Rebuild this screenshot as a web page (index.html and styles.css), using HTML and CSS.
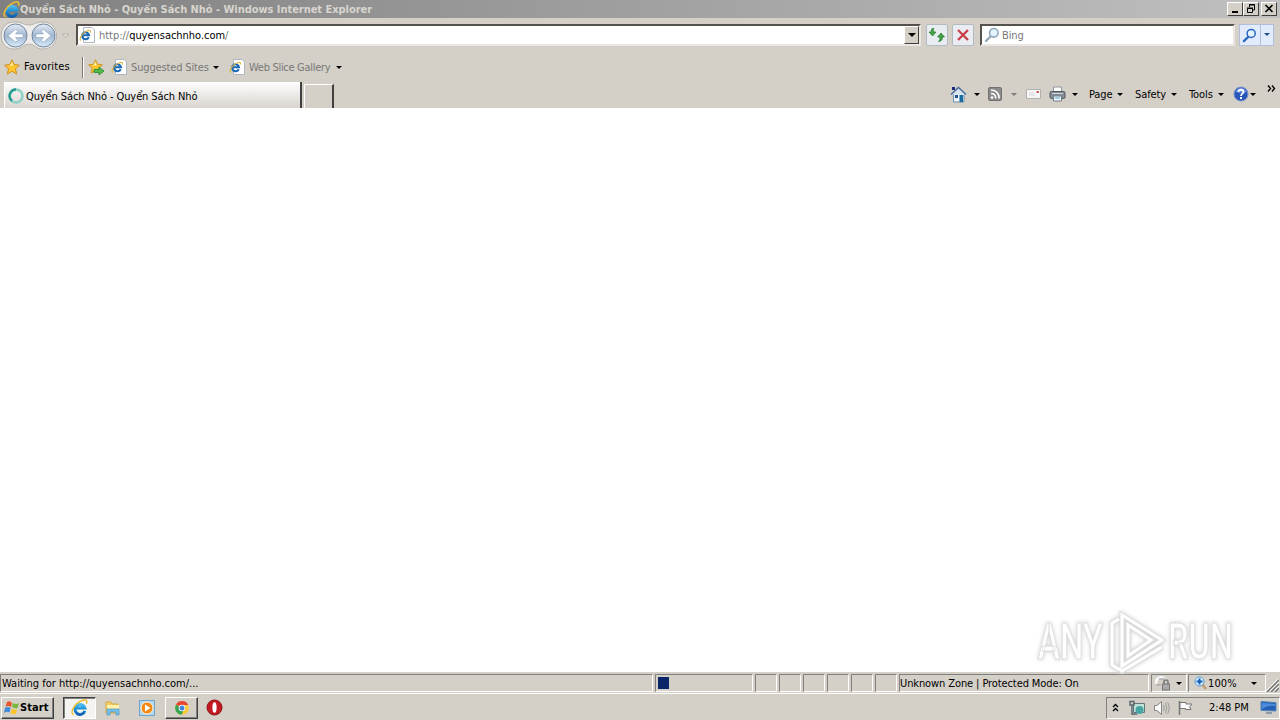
FILE: index.html
```html
<!DOCTYPE html>
<html lang="vi">
    <head>
        <meta charset="utf-8">
        <title>Quyển Sách Nhỏ - Windows Internet Explorer</title>
        <link rel="stylesheet" href="styles.css">
    </head>
    <body>
        <!-- shared icons -->
        <svg class="defs" width="0" height="0">
            <defs>
                <linearGradient id="ieBlue" gradientUnits="userSpaceOnUse" x1="0" y1="2" x2="0" y2="15">
                    <stop offset="0" stop-color="#72d5f7"/>
                    <stop offset=".5" stop-color="#239bdf"/>
                    <stop offset="1" stop-color="#0b5cad"/>
                </linearGradient>
                <linearGradient id="navBlue" x1="0" y1="0" x2="0" y2="1">
                    <stop offset="0" stop-color="#e6edf5"/>
                    <stop offset=".5" stop-color="#a0b6d0"/>
                    <stop offset="1" stop-color="#d8ecfa"/>
                </linearGradient>
                <symbol id="ie" viewBox="0 0 16 16">
                    <path d="M13 11.200A4.700 4.700 0 1 1 13 8.500H5" fill="none" stroke="url(#ieBlue)" stroke-width="2.800"/>
                    <path d="M2.500 14.800C-1.500 13.500 3 5 9 2C13 0 16 .5 14.500 4.500" fill="none" stroke="#edbd32" stroke-width="1.400"/>
                </symbol>
                <symbol id="iepage" viewBox="0 0 16 16">
                    <path d="M4.500 .5H13L15.500 3V15.500H4.500Z" fill="#fff" stroke="#aeb7c2"/>
                    <path d="M9.700 10.300A3.500 3.500 0 1 1 10 8.300H4" fill="none" stroke="#1769b5" stroke-width="2.100"/>
                    <path d="M2 13.500C-1 12 4 5 9 3.500C11 3 12 4 11.500 5.500" fill="none" stroke="#e5b438" stroke-width="1.100"/>
                </symbol>
                <symbol id="star" viewBox="0 0 16 16">
                    <path d="M8 .8L10.200 5.600L15.400 6.200L11.500 9.700L12.700 15L8 12.300L3.300 15L4.500 9.700L.6 6.200L5.800 5.600Z" fill="#ffc52f" stroke="#c88a1c" stroke-width=".9"/>
                    <path d="M8 3L9.300 6.600L5.500 7Z" fill="#fff0a0"/>
                </symbol>
                <symbol id="lens" viewBox="0 0 16 16">
                    <path d="M7 9L2 14" stroke-width="2.400" stroke-linecap="round" fill="none" stroke="currentColor"/>
                    <circle cx="9.800" cy="5.800" r="4.300" fill="#e4f4fc" stroke="currentColor" stroke-width="1.600"/>
                </symbol>
            </defs>
        </svg>

        <div class="titlebar">
            <svg class="titleIcon" width="17" height="17"><use href="#ie"/></svg>
            <span class="titleText">Quyển Sách Nhỏ - Quyển Sách Nhỏ - Windows Internet Explorer</span>
            <div class="winButtons">
                <div class="winBtn"><svg width="13" height="10"><path d="M3 8H9" stroke="#000" stroke-width="2"/></svg></div>
                <div class="winBtn"><svg width="13" height="10"><path d="M4.500 3V.5H9.500V6H8M4 1H10M2.500 4.500H7.500V8.500H2.500ZM2 4H8" fill="none" stroke="#000"/></svg></div>
                <div class="winBtn closeBtn"><svg width="13" height="10"><path d="M2.500 1L9.500 8M9.500 1L2.500 8" stroke="#000" stroke-width="1.600"/></svg></div>
            </div>
        </div>

        <div class="navRow">
            <svg class="navButtons" width="70" height="30" viewBox="0 0 70 30">
                <path d="M14 1C23 1 23 4 29 4S35 1 43 1C61 1 61 28 43 28C35 28 35 23 29 23S23 28 14 28C-3 28-3 1 14 1" fill="#eeedeb" stroke="#a9a7a3" stroke-width=".8"/>
                <circle cx="15.500" cy="14.500" r="11.500" fill="url(#navBlue)" stroke="#71869e"/>
                <circle cx="43.500" cy="14.500" r="11.500" fill="url(#navBlue)" stroke="#71869e"/>
                <path d="M23 13V16.500H15.500L18 19.500L15.500 21L8 14.700L15.500 8.500L18 10L15.500 13Z" fill="#fff" stroke="#8da6bf" stroke-width=".6"/>
                <path d="M36 13V16.500H43.500L41 19.500L43.500 21L51 14.700L43.500 8.500L41 10L43.500 13Z" fill="#fff" stroke="#8da6bf" stroke-width=".6"/>
                <path d="M62.500 13H69L65.700 16.500Z" fill="#e6e3dd" stroke="#aaa79f" stroke-width=".8"/>
            </svg>
            <div class="addressBox">
                <svg width="16" height="16"><use href="#iepage"/></svg>
                <span class="url">http://<b>quyensachnho.com</b>/</span>
                <div class="comboBtn"><i class="arrow"></i></div>
            </div>
            <div class="toolBtn refreshBtn">
                <svg width="18" height="18"><path d="M1 6H3.200C3 3 4 2 6 2.500C5 3.500 5.500 4 5.700 6H8L4.600 10ZM9.500 11L13 7L16.500 11H14.500C14.500 14 13 15.500 10.500 15.500C12 14 12 13 11.800 11Z" fill="#43a047" stroke="#237c2c" stroke-width=".7"/></svg>
            </div>
            <div class="toolBtn stopBtn">
                <svg width="18" height="18"><path d="M4 4L14 14M14 4L4 14" stroke="#c83e49" stroke-width="2.300"/></svg>
            </div>
            <div class="searchBox">
                <svg width="16" height="16"><use href="#lens"/></svg>
                <span>Bing</span>
            </div>
            <div class="searchBtn">
                <div class="searchGo"><svg width="15" height="15"><use href="#lens"/></svg></div>
                <div class="searchMore"><i class="arrow"></i></div>
            </div>
        </div>

        <div class="favRow">
            <svg width="16" height="16"><use href="#star"/></svg>
            <span class="favLabel">Favorites</span>
            <div class="favSep"></div>
            <svg class="favAdd" width="17" height="17"><use href="#star" width="15" height="15"/><path d="M6 10.500H11V8L16 12L11 16V13.500H6Z" fill="#54b948" stroke="#238532" stroke-width=".8"/></svg>
            <svg class="favPage" width="16" height="16"><use href="#iepage"/></svg>
            <span class="favLink suggested">Suggested Sites</span><i class="arrow"></i>
            <svg class="slicePage" width="16" height="16"><use href="#iepage"/></svg>
            <span class="favLink slice">Web Slice Gallery</span><i class="arrow"></i>
        </div>

        <div class="tabRow">
            <div class="tab">
                <svg width="16" height="16"><circle cx="8" cy="8" r="6.500" fill="none" stroke="#8fd0c8" stroke-width="2.500"/><path d="M8 1.500A6.500 6.500 0 0 0 4 13" fill="none" stroke="#279c91" stroke-width="2.500"/></svg>
                <span>Quyển Sách Nhỏ - Quyển Sách Nhỏ</span>
            </div>
            <div class="newTab"></div>
            <div class="commands">
                <svg width="17" height="17" viewBox="0 0 17 17"><path d="M3.500 8V16H14V8" fill="#eaf4fa" stroke="#6c8eac"/><path d="M1 8.500L8.500 1.500L16 8.500" fill="#d5e3ef" stroke="#476998" stroke-width="1.500"/><path d="M2 1H5V4H2Z" fill="#1b2980"/><path d="M5 9H8V12H5Z" fill="#24518c"/><path d="M9.500 9H13V16H9.500Z" fill="#186c9c"/></svg>
                <i class="arrow homeArrow"></i>
                <svg class="feed" width="14" height="14"><rect x=".5" y=".5" width="13" height="13" rx="1.500" fill="#8c8c8c" stroke="#717171"/><circle cx="4" cy="10.500" r="1.300" fill="#fff"/><path d="M3 6.500C6 6.500 7.700 8.500 7.700 11.500M3 3C8 3 11.200 6.500 11.200 11.500" fill="none" stroke="#fff" stroke-width="1.500"/></svg>
                <i class="arrow feedArrow"></i>
                <svg class="mail" width="15" height="12"><path d="M.5 1.500H14.500V10.500H.5Z" fill="#f5f5f5" stroke="#b3b1b0"/><path d="M10.500 3H13V5H10.500Z" fill="#c96060"/><path d="M3 5H8M3 7H9" stroke="#d5d5dc"/></svg>
                <svg class="printer" width="17" height="16" viewBox="0 0 17 16"><path d="M4.500 6V1H12.500V6" fill="#fafafa" stroke="#8e959d"/><rect x="1" y="5.500" width="15" height="7" rx="1.500" fill="#858b93" stroke="#50565e"/><path d="M3 7.500H14" stroke="#d1d6dc"/><path d="M4.500 10H12.500V15H4.500Z" fill="#eef7fc" stroke="#737e89"/><path d="M6 12H11" stroke="#4aa4c8"/></svg>
                <i class="arrow printArrow"></i>
                <span class="page">Page</span><i class="arrow"></i>
                <span class="safety">Safety</span><i class="arrow"></i>
                <span class="tools">Tools</span><i class="arrow"></i>
                <svg class="help" width="16" height="16"><circle cx="8" cy="8" r="7" fill="#2855b8" stroke="#7794cd"/><path d="M2.500 6Q4 2 8 2T13.500 6Q9 8 2.500 6" fill="#668ddd"/><path d="M5.500 6C5.500 3 10.500 3 10.500 6C10.500 7.800 8 7.500 8 10" fill="none" stroke="#fff" stroke-width="1.800"/><path d="M7 11H9V13H7Z" fill="#fff"/></svg>
                <i class="arrow"></i>
                <svg class="chevrons" width="9" height="7"><path d="M1 .5L3.500 3.500L1 6.500M5 .5L7.500 3.500L5 6.500" fill="none" stroke="#000" stroke-width="1.400"/></svg>
            </div>
        </div>

        <div class="content">
            <svg class="watermark" width="250" height="76" viewBox="0 0 250 76">
                <g class="markText">
                    <text x="8" y="55" textLength="65" lengthAdjust="spacingAndGlyphs">ANY</text>
                    <text x="138" y="55" textLength="65" lengthAdjust="spacingAndGlyphs">RUN</text>
                </g>
                <path class="markEdge" d="M89 15L82 19V61L92 67L132 43M92 11L132 36L92 62ZM98 21V52L121 36Z"/>
                <path class="markLine" d="M89 15L82 19V61L92 67L132 43M92 11L132 36L92 62ZM98 21V52L121 36Z"/>
            </svg>
        </div>

        <div class="statusBar">
            <div class="pane message">Waiting for http://quyensachnho.com/...</div>
            <div class="pane progress"><div class="block"></div></div>
            <div class="pane small"></div>
            <div class="pane small"></div>
            <div class="pane small"></div>
            <div class="pane small"></div>
            <div class="pane small"></div>
            <div class="pane small"></div>
            <div class="pane zone"><span>Unknown Zone | Protected Mode: On</span></div>
            <div class="pane privacy">
                <svg width="17" height="16"><path d="M1 9A5 5 0 0 1 10 5" fill="none" stroke="#f8f8f8" stroke-width="3"/><path d="M1 10H6M4 4H9V8" fill="none" stroke="#aaa" stroke-width="1.300"/><path d="M9 9V7A2 2 0 0 1 13 7V9" fill="none" stroke="#777" stroke-width="1.500"/><rect x="7.500" y="9" width="7" height="6" fill="#aaa" stroke="#777"/></svg>
                <i class="arrow"></i>
            </div>
            <div class="pane zoom">
                <svg width="14" height="15"><path d="M8 8L12 13" stroke="#c79d6e" stroke-width="2.500"/><circle cx="5.500" cy="5.500" r="4.500" fill="#def4ff" stroke="#4b9ad4"/><path d="M2.500 5.500H8.500M5.500 2.500V8.500" stroke="#155bb5" stroke-width="2"/></svg>
                <span>100%</span><i class="arrow"></i>
            </div>
            <svg class="grip" width="13" height="14"><path d="M1 14L13 2M5 14L13 6M9 14L13 10" stroke="#777" stroke-width="1.500"/><path d="M0 13L12 1M4 13L13 4M8 13L13 8" stroke="#fff"/></svg>
        </div>

        <div class="taskbar">
            <div class="startBtn">
                <svg width="16" height="16" viewBox="0 0 16 16"><path d="M3 2Q6 0 8 3L7 7Q4 5 1.500 7Z" fill="#e9542d"/><path d="M9 3Q12 5 15 3L13.500 8Q11 9 8 7Z" fill="#79b83a"/><path d="M1 8Q4 6 6.500 8L5.500 12.500Q3 11 0 13Z" fill="#3c8cda"/><path d="M8 8.500Q10.500 10.500 13 9L12 14Q9 15 6.500 13Z" fill="#fac42b"/></svg>
                <span>Start</span>
            </div>
            <div class="taskBtn active"><svg width="17" height="17"><use href="#ie"/></svg></div>
            <svg class="explorer" width="16" height="16"><path d="M1 2H6L7 4H13V13H1Z" fill="#f3ce66" stroke="#d6aa3b"/><path d="M2 5H14V10H2Z" fill="#fff1a8"/><path d="M2 15V9H14V15H11V12H5V15Z" fill="#77bfe4" stroke="#469ac8" stroke-width=".7"/></svg>
            <svg class="player" width="16" height="16"><rect x=".5" y=".5" width="15" height="15" fill="#b4d6ec" stroke="#6ca5c9"/><circle cx="8" cy="8" r="6" fill="#f28a16" stroke="#fff2db"/><path d="M6 4.500L11.500 8L6 11.500Z" fill="#fff"/></svg>
            <div class="taskBtn"><svg width="16" height="16" viewBox="0 0 16 16"><circle cx="8" cy="8" r="6.800" fill="#fbca3b"/><path d="M8 8L2 4.500A7 7 0 0 1 14.300 5H8Z" fill="#e64536"/><path d="M1.900 4.700A7 7 0 0 0 7.500 14.800L10 9.500L8 8Z" fill="#36a554"/><circle cx="8" cy="8" r="3.300" fill="#fff"/><circle cx="8" cy="8" r="2.500" fill="#4285dd"/></svg></div>
            <svg class="opera" width="17" height="17"><circle cx="8.500" cy="8.500" r="7.500" fill="#c21a20" stroke="#8c1015"/><ellipse cx="8.500" cy="8.500" rx="2.100" ry="5.300" fill="#fff"/></svg>
            <div class="tray">
                <svg class="trayUp" width="7" height="9"><path d="M1 4L3.500 1.500L6 4M1 8L3.500 5.500L6 8" fill="none" stroke="#000" stroke-width="1.300"/></svg>
                <svg class="trayNet" width="17" height="16"><path d="M4.500 3.500H15.500V12.500H4.500Z" fill="#bde2d9" stroke="#61747a"/><circle cx="10.500" cy="10" r="4" fill="#47a6a3"/><path d="M1 1.500H5V5H1ZM3 5V14H8" fill="none" stroke="#58656b" stroke-width="1.400"/></svg>
                <svg class="traySound" width="17" height="16"><path d="M1.500 5.500H4L8.500 1.500V14.500L4 10.500H1.500Z" fill="#f8f8f8" stroke="#858585"/><path d="M10.500 5Q12 8 10.500 11M12.500 3Q15 8 12.500 13M14.500 2Q18 8 14.500 14" fill="none" stroke="#999"/></svg>
                <svg class="trayFlag" width="17" height="16"><path d="M2.500 1V15" stroke="#777" stroke-width="1.500"/><path d="M3 2.500H9V4H15L12.500 7L14 9.500H8.500V8.500H3Z" fill="#fafafa" stroke="#777"/></svg>
                <span class="clock">2:48 PM</span>
                <svg class="desktop" width="17" height="15"><path d="M1 1.500L16 2.500V11L1 10.500Z" fill="#235fb3" stroke="#5987bd"/><path d="M2 3L15 4V6Q8 5 2 9Z" fill="#4c8cdd"/><path d="M6 13H12" stroke="#8d9ba8" stroke-width="2"/></svg>
            </div>
        </div>
    </body>
</html>
```
FILE: styles.css
```css
* { box-sizing: border-box; }
body {
  margin: 0;
  width: 1280px;
  height: 720px;
  overflow: hidden;
  display: flex;
  flex-direction: column;
  background: #d4d0c8;
  color: #000;
  font-family: "DejaVu Sans Condensed", "DejaVu Sans", sans-serif;
  font-size: 11px;
  letter-spacing: -0.1px;
  white-space: nowrap;
}
svg { display: block; flex: none; }
.arrow {
  flex: none;
  width: 0;
  height: 0;
  border: 3px solid transparent;
  border-top-color: #000;
  border-bottom: 0;
}

/* title bar */
.titlebar {
  height: 18px;
  flex: none;
  display: flex;
  align-items: center;
  padding: 0 3px;
  background: linear-gradient(to right, #808080, #c0c0c0);
}
.titleText {
  color: #d8d5ce;
  font-weight: bold;
  letter-spacing: -0.04px;
}
.winButtons { display: flex; margin-left: auto; }
.winBtn {
  width: 16px;
  height: 14px;
  padding: 1px;
  background: #d4d0c8;
  border: 1px solid;
  border-color: #fff #404040 #404040 #fff;
}
.closeBtn { margin-left: 2px; }

/* address row */
.navRow {
  height: 34px;
  flex: none;
  display: flex;
  align-items: center;
}
.navButtons { margin-top: 1px; }
.addressBox, .searchBox {
  height: 22px;
  display: flex;
  align-items: center;
  background: #fff;
  border: 2px solid;
  border-color: #55524d #eae7e2 #eae7e2 #55524d;
}
.addressBox { width: 845px; margin-left: 6px; padding-left: 1px; }
.url { margin-left: 4px; padding-top: 1px; color: #777; letter-spacing: -0.03px; }
.url b { color: #000; font-weight: normal; }
.comboBtn {
  width: 15px;
  height: 18px;
  margin-left: auto;
  display: flex;
  align-items: center;
  justify-content: center;
  background: #d4d0c8;
  border: 1px solid;
  border-color: #fff #404040 #404040 #fff;
}
.comboBtn .arrow { border-width: 4px 4px 0; }
.toolBtn {
  width: 22px;
  height: 22px;
  display: flex;
  align-items: center;
  justify-content: center;
  background: #e9edf1;
  border: 1px solid #b3bac3;
  border-radius: 2px;
}
.refreshBtn { margin-left: 5px; }
.stopBtn { margin-left: 4px; }
.searchBox {
  width: 255px;
  margin-left: 6px;
  padding-left: 2px;
  color: #777;
}
.searchBox svg { color: #91a8ba; }
.searchBox span { margin-left: 2px; padding-top: 1px; }
.searchBtn {
  width: 35px;
  height: 22px;
  margin-left: 4px;
  display: flex;
  background: #e1ebfb;
  border: 1px solid #b1bfdb;
}
.searchGo {
  width: 21px;
  padding: 3px 2px;
  border-right: 1px solid #b1bfdb;
  color: #2867c4;
}
.searchMore { padding: 8px 3px; }
.searchMore .arrow { display: block; border-top-color: #214f91; }

/* favorites */
.favRow {
  height: 30px;
  flex: none;
  display: flex;
  align-items: center;
  padding-left: 4px;
}
.favLabel { width: 58px; margin-left: 4px; padding-bottom: 2px; letter-spacing: 0.12px; }
.favSep {
  width: 2px;
  height: 21px;
  background: #777;
  border-right: 1px solid #fff;
}
.favAdd { margin-left: 4px; }
.favPage { margin-left: 6px; }
.favLink { color: #777; margin-left: 4px; letter-spacing: -0.15px; }
.suggested { width: 82px; }
.slicePage { margin-left: 10px; }
.slice { width: 87px; letter-spacing: -0.3px; }

/* tabs and command bar */
.tabRow {
  height: 26px;
  flex: none;
  display: flex;
  align-items: flex-end;
  padding-left: 4px;
}
.tab {
  width: 298px;
  height: 26px;
  display: flex;
  align-items: center;
  padding: 2px 0 0 3px;
  background: linear-gradient(to bottom, #fff, #d8d4ce);
  border-right: 2px solid #404040;
  border-left: 1px solid #fff;
}
.tab span { margin-left: 2px; }
.newTab {
  width: 30px;
  height: 24px;
  margin-left: 2px;
  border: 1px solid #fff;
  border-right: 2px solid #404040;
  border-bottom: 0;
}
.commands {
  width: 330px;
  height: 26px;
  margin-left: auto;
  display: flex;
  align-items: center;
  padding-bottom: 2px;
}
.homeArrow { margin-left: 7px; }
.feed { margin-left: 8px; }
.feedArrow { margin-left: 9px; opacity: .4; }
.mail { margin-left: 9px; }
.printer { margin-left: 8px; }
.printArrow { margin-left: 6px; }
.page { width: 28px; margin-left: 11px; }
.safety { width: 36px; margin-left: 12px; }
.tools { width: 29px; margin-left: 12px; }
.help { margin-left: 9px; }
.help + .arrow { margin-left: 1px; }
.chevrons { margin: 0 0 12px 11px; }

/* page area */
.content {
  height: 564px;
  flex: none;
  position: relative;
  background: #fff;
}
.watermark {
  position: absolute;
  left: 1030px;
  top: 496px;
  filter: drop-shadow(0 0 2px #ccc);
}
.markText {
  font: 500 50px Roboto, "Liberation Sans", sans-serif;
  fill: #fff;
  stroke: #dedede;
  stroke-width: 1px;
  letter-spacing: 0;
}
.markEdge { fill: none; stroke: #dedede; stroke-width: 5px; }
.markLine { fill: none; stroke: #fff; stroke-width: 3px; }

/* status bar */
.statusBar {
  height: 21px;
  flex: none;
  display: flex;
  padding-top: 2px;
}
.pane {
  height: 18px;
  flex: none;
  display: flex;
  align-items: center;
  margin-right: 2px;
  border: 1px solid;
  border-color: #808080 #fff #fff #808080;
}
.message { width: 653px; padding-left: 1px; letter-spacing: 0; }
.progress { width: 98px; padding-left: 2px; }
.block { width: 11px; height: 12px; background: #0a246a; }
.small { width: 22px; }
.zone { width: 250px; }
.privacy { width: 36px; padding-left: 3px; margin-right: 1px; }
.privacy .arrow { margin-left: 4px; }
.zoom { width: 78px; padding-left: 5px; margin-right: 0; letter-spacing: 0.1px; }
.zoom span { width: 43px; }
.grip { margin-top: 4px; }

/* taskbar */
.taskbar {
  height: 27px;
  flex: none;
  display: flex;
  align-items: center;
  padding: 1px 0 0 1px;
  border-top: 1px solid #fff;
}
.startBtn, .taskBtn {
  height: 22px;
  display: flex;
  align-items: center;
  border: 1px solid;
  border-color: #fff #404040 #404040 #fff;
  box-shadow: inset -1px -1px #808080;
}
.startBtn { width: 53px; padding-left: 2px; font-weight: bold; letter-spacing: 0.1px; }
.taskBtn { width: 33px; justify-content: center; margin-left: 10px; }
.active {
  background: #f4f3f0;
  border-color: #404040 #fff #fff #404040;
  box-shadow: inset 1px 1px #808080;
  margin-left: 9px;
}
.explorer { margin-left: 9px; }
.player { margin-left: 18px; }
.opera { margin-left: 8px; }
.tray {
  width: 174px;
  height: 22px;
  margin-left: auto;
  display: flex;
  align-items: center;
  padding-left: 5px;
  border: 1px solid;
  border-color: #808080 #fff #fff #808080;
}
.trayNet { margin-left: 10px; }
.traySound { margin-left: 7px; }
.trayFlag { margin-left: 7px; }
.clock { width: 51px; margin-left: 15px; letter-spacing: 0; }
```
